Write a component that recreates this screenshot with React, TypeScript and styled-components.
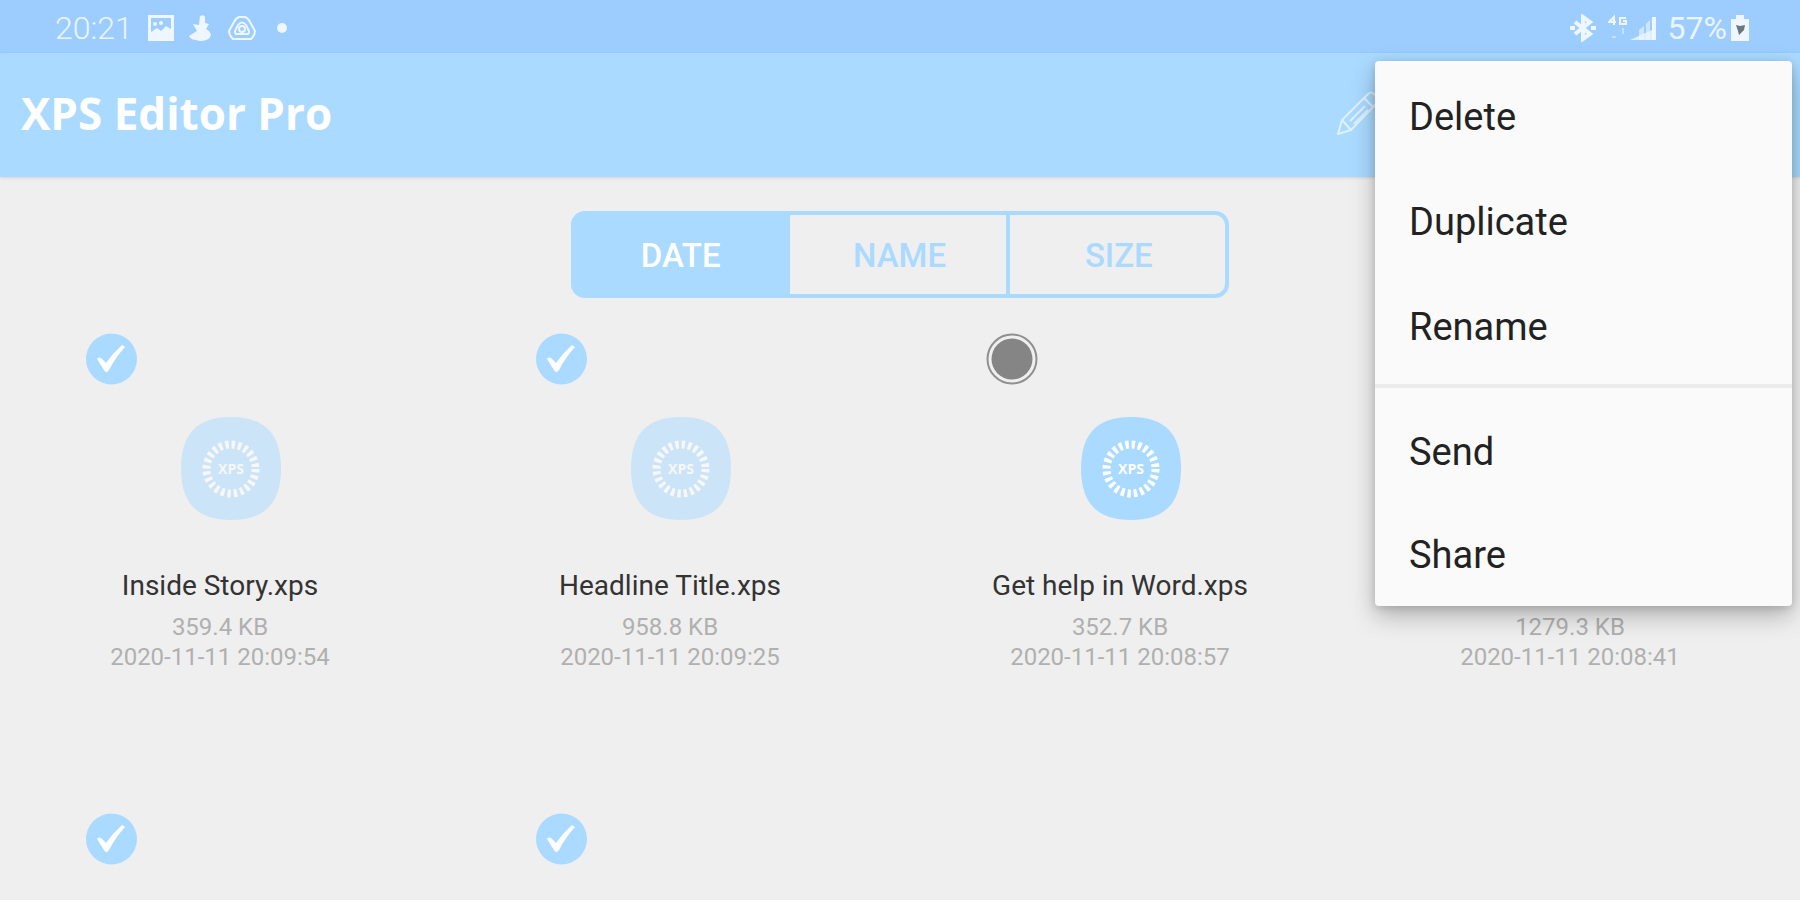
import React from "react";
import styled, { createGlobalStyle } from "styled-components";

const GlobalStyle = createGlobalStyle`
  *, *::before, *::after { box-sizing: border-box; }
  body { margin: 0; background: #efefef; font-family: Roboto, "Liberation Sans", sans-serif; }
`;

const Page = styled.div`
  position: relative;
  height: 100vh;
  overflow: hidden;
  background: #efefef;
`;

const StatusBar = styled.div`
  display: flex;
  justify-content: space-between;
  align-items: center;
  height: 53px;
  padding: 2px 51px 0 55px;
  background: #9dcdff;
  color: #eaf5ff;
  font-size: 32px;
  line-height: 36px;
`;

const StatusGroup = styled.div`
  display: flex;
  align-items: center;
  gap: 15px;
`;

const Level = styled.span`
  display: flex;
  align-items: center;
  gap: 4px;
`;

const Signals = styled(StatusGroup)`
  gap: 12px;
`;

const Clock = styled.time`
  font-weight: 300;
`;

const Header = styled.header`
  display: flex;
  justify-content: space-between;
  align-items: center;
  height: 124px;
  padding: 0 420px 4px 21px;
  background: #aadaff;
  box-shadow: 0 1px 3px rgba(0, 0, 0, 0.12);
`;

const Title = styled.h1`
  margin: 0;
  color: #fff;
  font: 700 44px/60px "Open Sans", "Noto Sans", sans-serif;
`;

const IconButton = styled.button`
  display: flex;
  padding: 0;
  border: 0;
  background: none;
`;

const Segments = styled.div`
  display: grid;
  grid-template-columns: repeat(3, 1fr);
  width: 658px;
  height: 87px;
  margin: 34px auto 35px;
`;

const Segment = styled.button<{ $active?: boolean }>`
  padding: 2px 0 0;
  border: 4px solid #aadaff;
  border-left-width: 0;
  background: ${(p) => (p.$active ? "#aadaff" : "transparent")};
  color: ${(p) => (p.$active ? "#fff" : "#aadaff")};
  font: 500 33px/40px Roboto, sans-serif;
  &:first-child { border-radius: 14px 0 0 14px; border-right-width: 0; }
  &:not(:first-child) { padding-left: 3px; }
  &:last-child { border-radius: 0 14px 14px 0; }
`;

const Grid = styled.ul`
  display: grid;
  grid-template-columns: repeat(4, 1fr);
  grid-auto-rows: 480px;
  margin: 0;
  padding: 0;
  list-style: none;
`;

const Card = styled.li`
  display: flex;
  flex-direction: column;
  align-items: center;
  padding-right: 10px;
`;

const Tick = styled.label`
  display: grid;
  align-self: flex-start;
  margin-left: 86px;
  > * { grid-area: 1 / 1; }
  svg { pointer-events: none; }
`;

const TickInput = styled.input`
  appearance: none;
  width: 52px;
  height: 52px;
  margin: 0;
`;

const Thumb = styled.div<{ $dim?: boolean }>`
  display: flex;
  height: 103px;
  margin: 32px 0 48px 22px;
  opacity: ${(p) => (p.$dim ? 0.5 : 1)};
`;

const FileName = styled.div`
  height: 36px;
  color: #333;
  font-size: 28px;
  line-height: 36px;
`;

const Details = styled.div`
  display: flex;
  flex-direction: column;
  align-items: center;
  margin-top: 8px;
  color: #b0b0b0;
  font-size: 24px;
  line-height: 30px;
`;

const Menu = styled.div`
  position: absolute;
  top: 61px;
  right: 8px;
  width: 417px;
  padding-top: 3px;
  border-radius: 4px;
  background: #fafafa;
  box-shadow: 0 10px 24px rgba(0, 0, 0, 0.26), 0 2px 8px rgba(0, 0, 0, 0.14);
`;

const MenuItem = styled.button`
  display: block;
  width: 100%;
  height: 105px;
  padding: 0 34px;
  border: 0;
  background: none;
  color: #222;
  font: 400 38px/48px Roboto, sans-serif;
  text-align: left;
  &:last-child { height: 102px; }
`;

const Divider = styled.hr`
  height: 4px;
  margin: 5px 0 11px;
  border: 0;
  background: #ececec;
`;

const PictureIcon = () => (
  <svg width="26" height="26" viewBox="0 0 26 26" fill="#eef7ff">
    <path fillRule="evenodd" d="M0 0h26v26H0zM3 3v14l6-4 4 3 5-5 5 3V3z" />
    <circle cx="7" cy="9" r="2" />
    <circle cx="13" cy="8" r="2" />
  </svg>
);

const FanIcon = () => (
  <svg width="24" height="26" viewBox="0 0 24 26" fill="#eef7ff">
    <path d="M11 1q4-2 5 1v6l4 1-3 5q4 2 5 6-1 4-5 5-5 2-10 0-5 0-7-4l8-5-4-7 6 1z" />
  </svg>
);

const DriveIcon = () => (
  <svg width="28" height="26" viewBox="0 0 28 26" fill="none" stroke="#eef7ff" strokeWidth="2" strokeLinejoin="round">
    <path d="M11 2h6q3 1 5 5l5 9q0 4-4 8H5q-4-4-4-8l5-9q2-4 5-5z" />
    <path d="M8 19q-2-2 0-5l2-4q4-5 8 0l2 4q2 3 0 5z" />
    <circle cx="14" cy="14" r="3" />
  </svg>
);

const DotIcon = () => (
  <svg width="24" height="10" viewBox="0 0 24 10" fill="#eef7ff">
    <circle cx="11" cy="5" r="5" />
  </svg>
);

const BluetoothIcon = () => (
  <svg width="26" height="28" viewBox="0 0 26 28" fill="none" stroke="#eef7ff" strokeWidth="4">
    <path d="M5 8l15 12-7 5V3l7 5L5 20" />
    <path d="M0 14h5M21 14h5" />
  </svg>
);

const NetworkIcon = () => (
  <svg width="48" height="28" viewBox="0 0 48 28" fill="#eef7ff">
    <path d="M22 26l22-10v10z" opacity=".8" />
    <path d="M31 26V16l5-4v14zM38 26V10l4-4v20z" opacity=".6" />
    <path d="M44 3h4v23h-4z" />
    <path d="M6 11V3L1 8h7M18 4h-6v6h6V7h-3" fill="none" stroke="#eef7ff" strokeWidth="2" />
    <path d="M15 14v6M4 23h4" stroke="#eef7ff" strokeWidth="2" opacity=".5" />
  </svg>
);

const BatteryIcon = () => (
  <svg width="18" height="26" viewBox="0 0 18 26">
    <path d="M5 0h8v4h5v22H0V4h5z" fill="#eef7ff" />
    <path d="M5 10l4 1 5-1-1 5-5 5-1-4z" fill="#6c7680" />
  </svg>
);

const PencilIcon = () => (
  <svg width="44" height="46" viewBox="0 0 44 46" fill="none" stroke="#dff1ff" strokeWidth="2" strokeLinejoin="round">
    <path d="M2 44l4-14L32 4q3-3 6 0l3 3q3 3 0 6L15 40z" />
    <path d="M6 30l9 10M14 31l15-15M18 34l14-14M28 8l9 9" />
  </svg>
);

const CheckMark = () => (
  <svg width="52" height="52" viewBox="0 0 52 52">
    <circle cx="25.5" cy="26" r="25.5" fill="#aadaff" />
    <path d="M11 26q2-3 5 0l4 4q7-10 16-18l3 2Q29 25 23 37q-3 4-5 0z" fill="#fff" />
  </svg>
);

const EmptyMark = () => (
  <svg width="52" height="52" viewBox="0 0 52 52" fill="none">
    <circle cx="26" cy="26" r="24.5" stroke="#909090" strokeWidth="2" />
    <circle cx="26" cy="26" r="20.5" fill="#858585" />
  </svg>
);

const XpsIcon = () => (
  <svg width="100" height="103" viewBox="0 0 100 103">
    <path d="M50 0C84 0 100 17 100 51.500s-16 51.500-50 51.500S0 86 0 51.500 16 0 50 0z" fill="#aadaff" />
    <circle cx="50" cy="52" r="24.5" fill="none" stroke="#fff" strokeWidth="8" strokeDasharray="3.4 3.01" />
    <text x="50" y="57" textAnchor="middle" fill="#fff" fontFamily="Open Sans, sans-serif" fontWeight="700" fontSize="14">XPS</text>
  </svg>
);

type FileEntry = { name?: string; size?: string; date?: string; checked?: boolean };

const files: FileEntry[] = [
  { name: "Inside Story.xps", size: "359.4 KB", date: "2020-11-11 20:09:54", checked: true },
  { name: "Headline Title.xps", size: "958.8 KB", date: "2020-11-11 20:09:25", checked: true },
  { name: "Get help in Word.xps", size: "352.7 KB", date: "2020-11-11 20:08:57" },
  { size: "1279.3 KB", date: "2020-11-11 20:08:41" },
  { checked: true },
  { checked: true },
];

const FileCard = ({ file, index }: { file: FileEntry; index: number }) => (
  <Card>
    <Tick htmlFor={`file-${index}`}>
      <TickInput id={`file-${index}`} type="checkbox" defaultChecked={file.checked} aria-label={file.name ?? "File"} />
      {file.checked ? <CheckMark /> : <EmptyMark />}
    </Tick>
    {file.date && (
      <>
        <Thumb $dim={file.checked}><XpsIcon /></Thumb>
        <FileName>{file.name}</FileName>
        <Details>
          <span>{file.size}</span>
          <time>{file.date}</time>
        </Details>
      </>
    )}
  </Card>
);

export default function App() {
  return (
    <Page>
      <GlobalStyle />
      <StatusBar>
        <StatusGroup>
          <Clock>20:21</Clock>
          <PictureIcon />
          <FanIcon />
          <DriveIcon />
          <DotIcon />
        </StatusGroup>
        <Signals>
          <BluetoothIcon />
          <NetworkIcon />
          <Level>
            57%
            <BatteryIcon />
          </Level>
        </Signals>
      </StatusBar>
      <Header>
        <Title>XPS Editor Pro</Title>
        <IconButton aria-label="Edit"><PencilIcon /></IconButton>
      </Header>
      <main>
        <Segments>
          <Segment $active>DATE</Segment>
          <Segment>NAME</Segment>
          <Segment>SIZE</Segment>
        </Segments>
        <Grid>
          {files.map((file, i) => <FileCard key={i} file={file} index={i} />)}
        </Grid>
      </main>
      <Menu>
        <MenuItem>Delete</MenuItem>
        <MenuItem>Duplicate</MenuItem>
        <MenuItem>Rename</MenuItem>
        <Divider />
        <MenuItem>Send</MenuItem>
        <MenuItem>Share</MenuItem>
      </Menu>
    </Page>
  );
}
